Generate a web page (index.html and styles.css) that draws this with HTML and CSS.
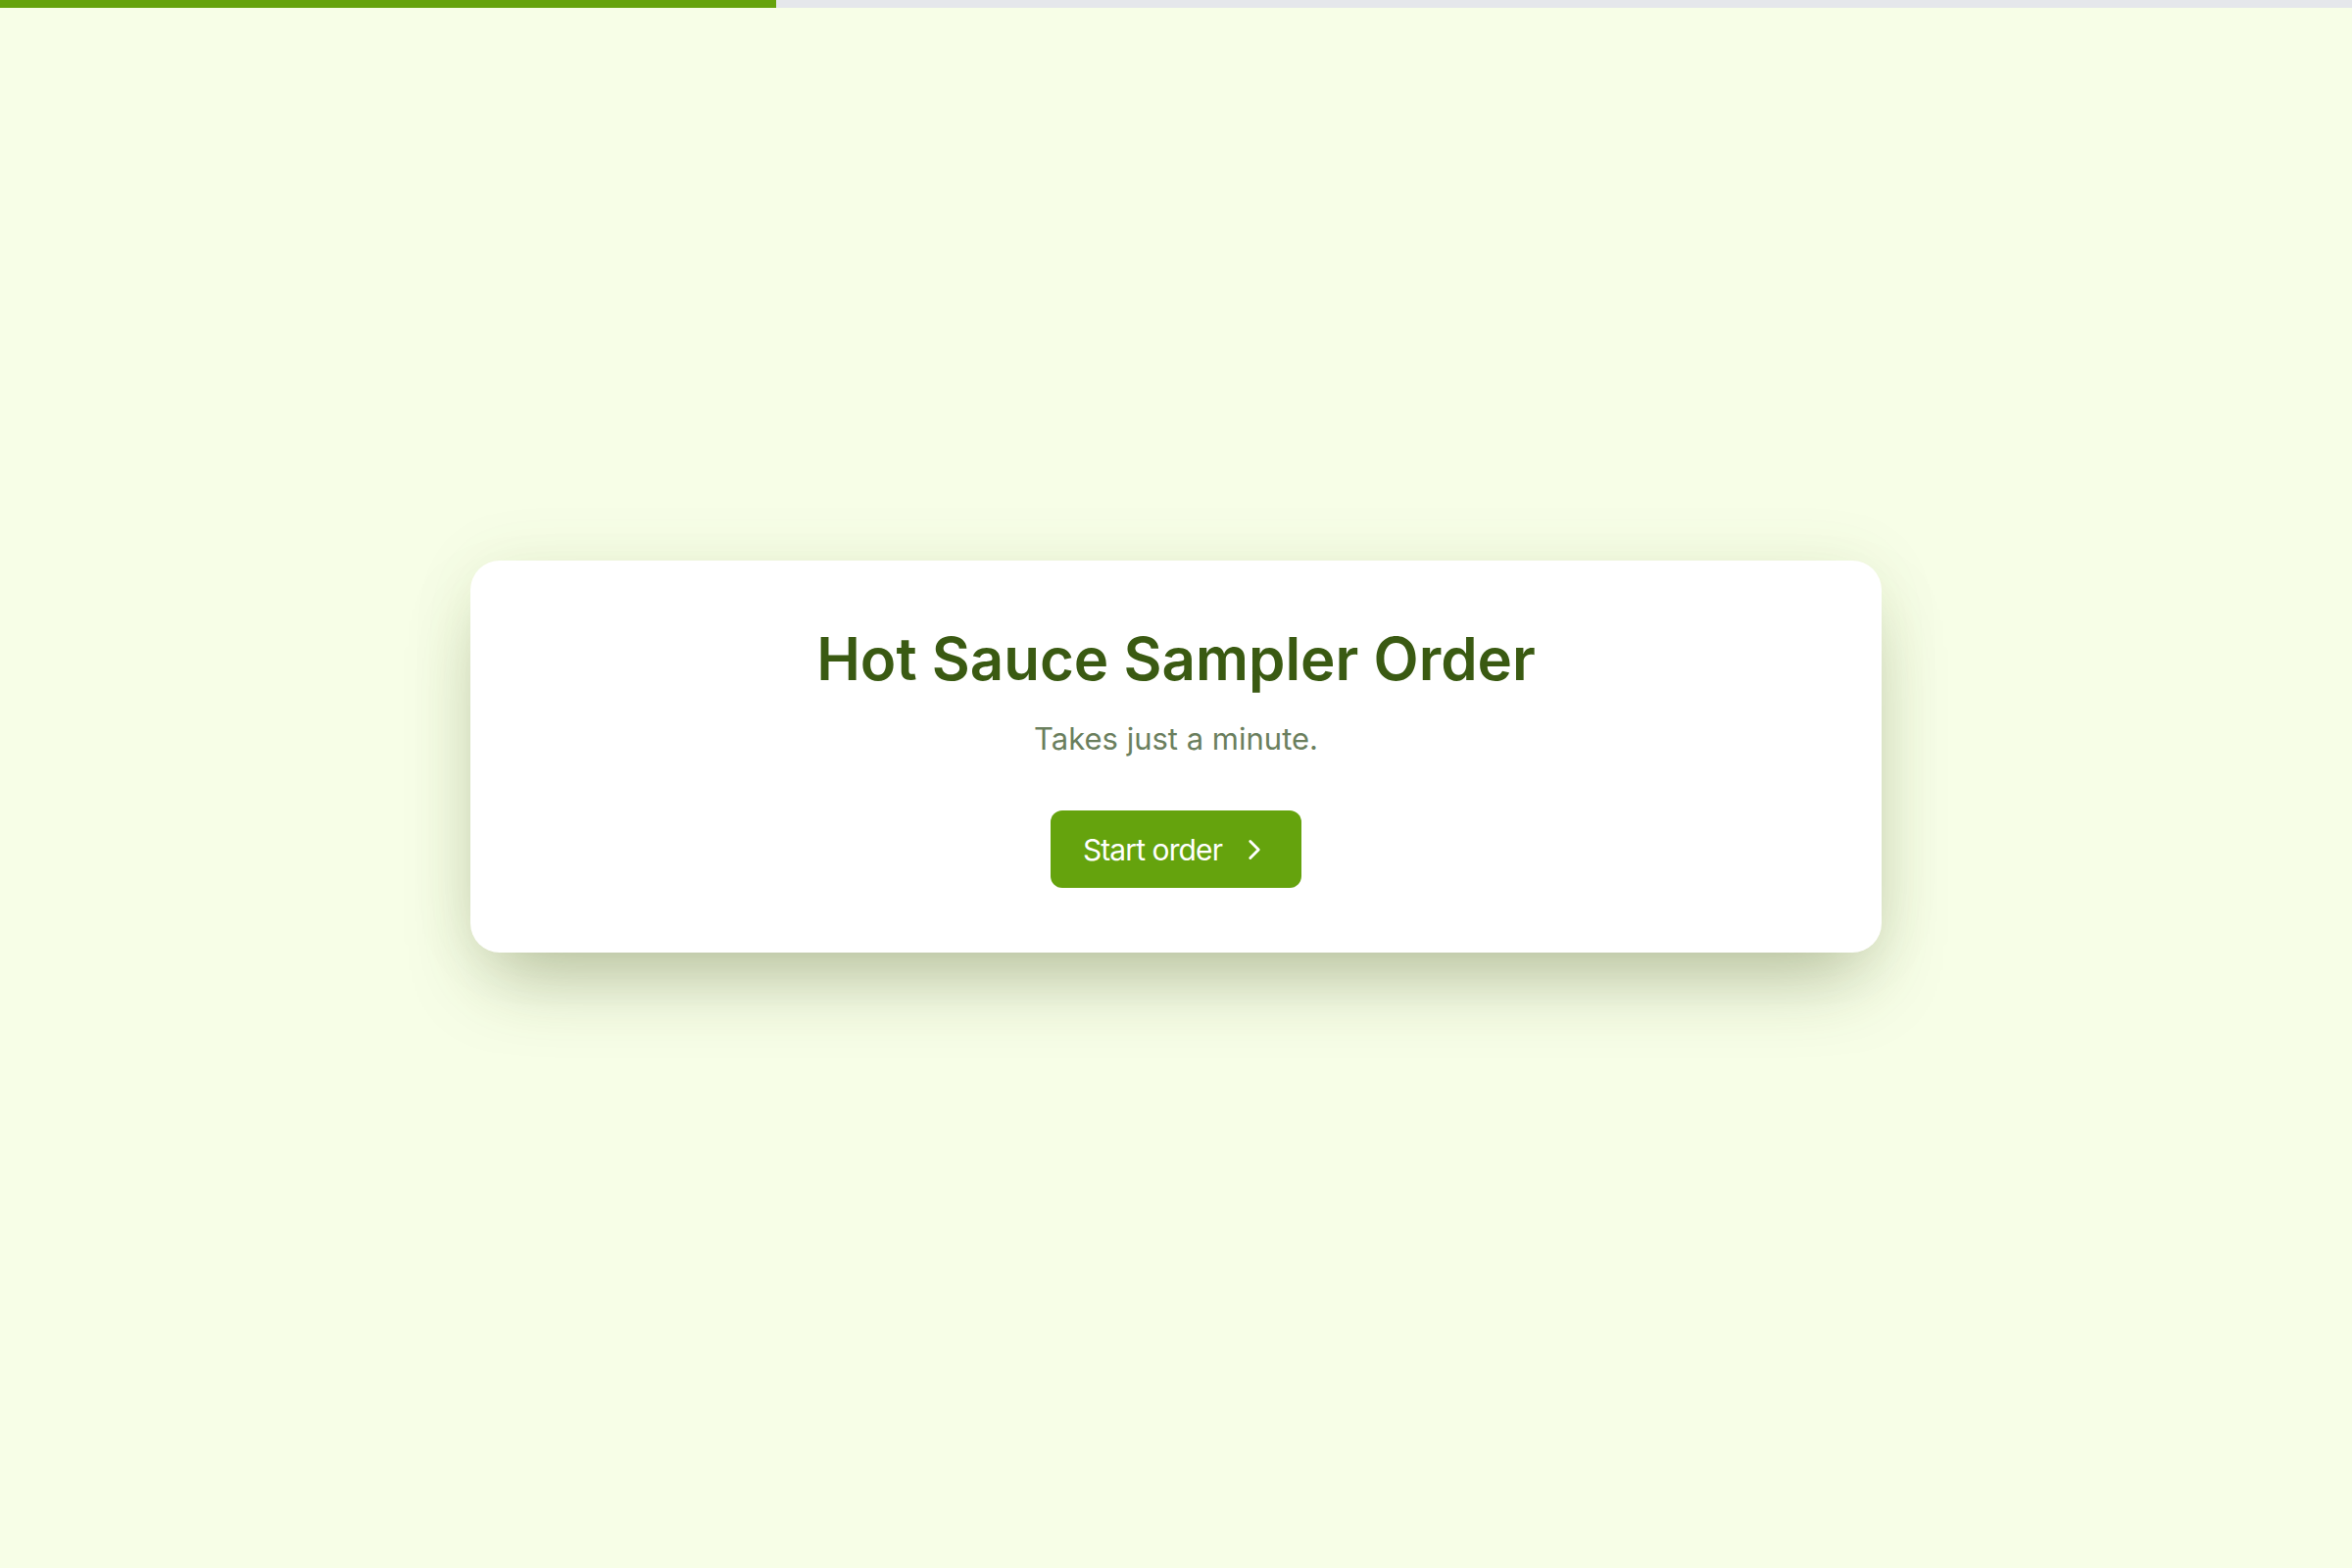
FILE: index.html
```html
<!DOCTYPE html>
<html lang="en">
<head>
<meta charset="utf-8">
<title>Hot Sauce Sampler Order</title>
<link rel="stylesheet" href="styles.css">
</head>
<body>
<div class="progress"><div class="progress-fill" style="width:33%"></div></div>
<main class="stage">
  <section class="card">
    <h1 class="title">Hot Sauce Sampler Order</h1>
    <p class="subtitle">Takes just a minute.</p>
    <button class="start" type="button">
      <span>Start order</span>
      <svg class="chev" viewBox="0 0 24 24" fill="none" stroke="currentColor" stroke-width="2" stroke-linecap="round" stroke-linejoin="round"><path d="M9 6l6 6-6 6"/></svg>
    </button>
  </section>
</main>
</body>
</html>
```
FILE: styles.css
```css
* { box-sizing: border-box; }
html, body { margin: 0; padding: 0; height: 100%; }
body {
  background: #f7fee7;
  font-family: Inter, "Open Sans", "Liberation Sans", sans-serif;
  display: flex;
  flex-direction: column;
  min-height: 1600px;
}
.progress {
  height: 8px;
  background: #e5e7eb;
  flex: none;
}
.progress-fill {
  height: 100%;
  background: #65a30d;
}
.stage {
  flex: 1;
  display: flex;
  align-items: center;
  justify-content: center;
  padding-bottom: 64px;
}
.card {
  width: 1440px;
  height: 400px;
  background: #ffffff;
  border-radius: 30px;
  box-shadow: 0 40px 80px -20px rgba(60, 75, 25, 0.36), 0 0 70px rgba(90, 120, 30, 0.07);
  display: flex;
  flex-direction: column;
  align-items: center;
  padding-top: 64px;
}
.title {
  margin: 0;
  font-size: 60px;
  line-height: 72px;
  font-weight: 600;
  color: #3a5a12;
  letter-spacing: 0;
}
.subtitle {
  margin: 26px 0 0;
  font-size: 31px;
  line-height: 40px;
  color: #6b7f5e;
}
.start {
  margin-top: 53px;
  width: 256px;
  height: 79px;
  border: none;
  border-radius: 12px;
  background: #65a30d;
  color: #ffffff;
  font-family: inherit;
  font-size: 30px;
  font-weight: 400;
  letter-spacing: -0.9px;
  display: flex;
  align-items: center;
  justify-content: center;
  gap: 16px;
  padding: 0 0 0 2px;
}
.chev { width: 34px; height: 34px; flex: none; }
```
